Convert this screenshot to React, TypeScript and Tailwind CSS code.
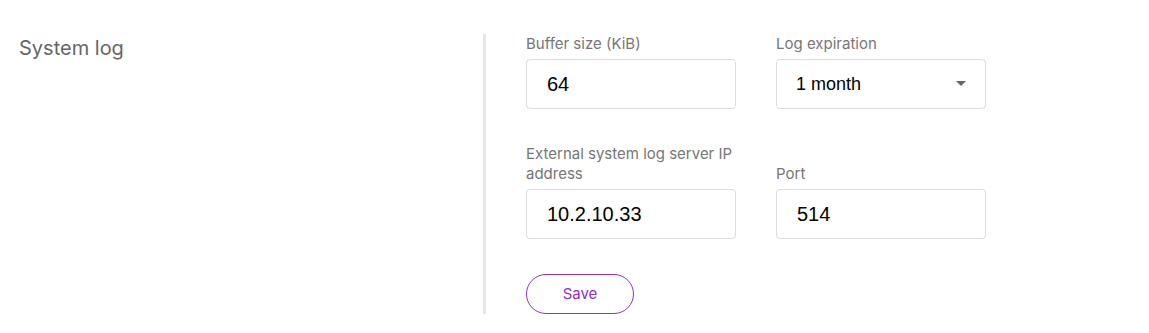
import React, { useState } from 'react';

const labelCls = "block text-[15px] leading-5 text-[#767676] mb-[5px]";
const inputCls =
  "w-full h-[50px] px-[20px] rounded-[4px] border border-[#dcdcdc] bg-white text-[20px] text-black outline-none";

const Field: React.FC<{ label: string; children: React.ReactNode }> = ({ label, children }) => (
  <div className="flex flex-col justify-end">
    <label className={labelCls} style={{ fontFamily: 'Inter, sans-serif' }}>{label}</label>
    {children}
  </div>
);

export default function App() {
  const [bufferSize, setBufferSize] = useState('64');
  const [expiration, setExpiration] = useState('1 month');
  const [serverIp, setServerIp] = useState('10.2.10.33');
  const [port, setPort] = useState('514');

  return (
    <div className="min-h-screen bg-white flex pt-[34px] pb-[19px]" style={{ fontFamily: 'Inter, sans-serif' }}>
      <div className="w-[483px] shrink-0 pl-[19px]">
        <h2 className="text-[20px] leading-7 font-normal text-[#666666]">System log</h2>
      </div>

      <div className="border-l-[3px] border-[#e6e6e6] pl-[40px]">
        <div className="grid grid-cols-[210px_210px] gap-x-10 gap-y-[35px]">
          <Field label="Buffer size (KiB)">
            <input
              value={bufferSize}
              onChange={(e) => setBufferSize(e.target.value)}
              className={inputCls}
              style={{ fontFamily: '"Liberation Sans", Arial, sans-serif' }}
            />
          </Field>

          <Field label="Log expiration">
            <div className="relative">
              <select
                value={expiration}
                onChange={(e) => setExpiration(e.target.value)}
                className="w-full h-[50px] pl-[19px] pr-10 rounded-[4px] border border-[#dcdcdc] bg-white text-[18px] text-black outline-none appearance-none"
                style={{ fontFamily: '"Liberation Sans", Arial, sans-serif' }}
              >
                <option>1 day</option>
                <option>1 week</option>
                <option>1 month</option>
                <option>3 months</option>
              </select>
              <svg
                className="pointer-events-none absolute right-[20px] top-[22px]"
                width="10"
                height="5"
                viewBox="0 0 10 5"
              >
                <path d="M0 0h10L5 5z" fill="#666666" />
              </svg>
            </div>
          </Field>

          <Field label="External system log server IP address">
            <input
              value={serverIp}
              onChange={(e) => setServerIp(e.target.value)}
              className={inputCls}
              style={{ fontFamily: '"Liberation Sans", Arial, sans-serif' }}
            />
          </Field>

          <Field label="Port">
            <input
              value={port}
              onChange={(e) => setPort(e.target.value)}
              className={inputCls}
              style={{ fontFamily: '"Liberation Sans", Arial, sans-serif' }}
            />
          </Field>
        </div>

        <button
          type="button"
          className="mt-[35px] w-[108px] h-[40px] rounded-full border border-[#8d2fd0] text-[15px] text-[#8d2fd0] bg-white"
        >
          Save
        </button>
      </div>
    </div>
  );
}
